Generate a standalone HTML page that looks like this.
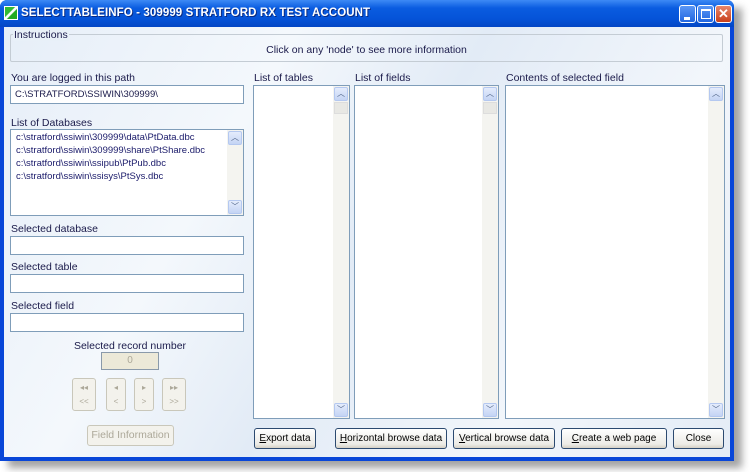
<!DOCTYPE html>
<html><head><meta charset="utf-8"><style>
*{margin:0;padding:0;box-sizing:border-box}
body{width:750px;height:472px;background:#fff;position:relative;overflow:hidden;font-family:"Liberation Sans",sans-serif;font-size:10.5px;color:#1a1a4a}
.shadow{position:absolute;left:8px;top:8px;width:734px;height:460px;background:#666;filter:blur(4px);opacity:.6}
.win{position:absolute;left:0;top:0;width:734px;height:461px;background:#0846d8;border-radius:7px 7px 0 0}
.title{position:absolute;left:0;top:0;width:734px;height:27px;border-radius:7px 7px 0 0;background:linear-gradient(#3d8af5,#0a5ce0 30%,#0553d8 70%,#0346c4)}
.title span{position:absolute;left:21px;top:7px;color:#fff;font-weight:bold;font-size:11.5px;letter-spacing:.1px;text-shadow:1px 1px #0a2a80}
.ico{position:absolute;left:4px;top:6px;width:14px;height:14px;background:linear-gradient(135deg,#3b3 40%,#fff 45%,#fff 55%,#2a2 60%);border:1px solid #fff}
.tb{position:absolute;top:5px;width:17px;height:18px;border:1px solid #fff;border-radius:3px;background:linear-gradient(#5a96f5,#2266e0)}
.client{position:absolute;left:4px;top:27px;width:726px;height:430px;background:linear-gradient(120deg,#e6eef8,#f4f8fc 30%,#e2ebf6 50%,#f2f6fb 75%,#e4ecf6)}
.abs{position:absolute}
.lbl{position:absolute;font-size:10.5px;color:#1a1a4a;white-space:nowrap}
.box{position:absolute;background:#fff;border:1px solid #7f9db9}
.sb{position:absolute;right:0;top:0;bottom:0;width:16px;background:#f4f4f0}
.ar{position:absolute;left:1px;width:14px;height:14px;background:linear-gradient(#e4ecfc,#c4d4f4);border:1px solid #b4c8f0;border-radius:2px;font-size:8px;color:#4d6185;text-align:center;line-height:12px}
.btn{position:absolute;height:21px;border:1px solid #2c4a70;border-radius:3px;background:linear-gradient(#fff,#ecebe6 80%,#d6d0c5);font-size:10px;color:#000;text-align:center;line-height:19px;white-space:nowrap}
.dis{position:absolute;border:1px solid #c9c7ba;border-radius:3px;background:#f3f2ec;color:#aca899;text-align:center;font-size:8px}
</style></head><body>
<div class="shadow"></div>
<div class="win">
<div class="title"><div class="ico"></div><span>SELECTTABLEINFO - 309999 STRATFORD RX TEST ACCOUNT</span>
<div class="tb" style="left:679px"><div style="position:absolute;left:4px;top:11px;width:6px;height:3px;background:#fff"></div></div>
<div class="tb" style="left:697px"><div style="position:absolute;left:3px;top:3px;width:10px;height:10px;border:1px solid #fff;border-top-width:2px"></div></div>
<div class="tb" style="left:715px;background:linear-gradient(#e8866a,#c8401c);color:#fff;font-size:13px;font-weight:bold;text-align:center;line-height:16px">✕</div>
</div>
<div class="client">
<div class="abs" style="left:6px;top:7px;width:713px;height:28px;border:1px solid #c4ccd4;border-radius:2px"></div>
<div class="lbl" style="left:9px;top:2px;background:#e8f0f8;padding:0 1px">Instructions</div>
<div class="lbl" style="left:6px;top:17px;width:713px;text-align:center">Click on any 'node' to see more information</div>

<div class="lbl" style="left:7px;top:45px">You are logged in this path</div>
<div class="box" style="left:6px;top:58px;width:234px;height:19px;padding:3px 4px;font-size:9.5px">C:\STRATFORD\SSIWIN\309999\</div>

<div class="lbl" style="left:7px;top:90px">List of Databases</div>
<div class="box" style="left:6px;top:102px;width:234px;height:87px;font-size:9.5px;line-height:13px;padding:1px 5px;color:#1a1a6a">
c:\stratford\ssiwin\309999\data\PtData.dbc<br>c:\stratford\ssiwin\309999\share\PtShare.dbc<br>c:\stratford\ssiwin\ssipub\PtPub.dbc<br>c:\stratford\ssiwin\ssisys\PtSys.dbc
<div class="sb"><div class="ar" style="top:1px">︿</div><div class="ar" style="bottom:1px">﹀</div></div></div>

<div class="lbl" style="left:7px;top:196px">Selected database</div>
<div class="box" style="left:6px;top:209px;width:234px;height:19px"></div>
<div class="lbl" style="left:7px;top:234px">Selected table</div>
<div class="box" style="left:6px;top:247px;width:234px;height:19px"></div>
<div class="lbl" style="left:7px;top:273px">Selected field</div>
<div class="box" style="left:6px;top:286px;width:234px;height:19px"></div>

<div class="lbl" style="left:50px;top:313px;width:152px;text-align:center">Selected record number</div>
<div class="abs" style="left:97px;top:325px;width:58px;height:18px;border:1px solid #8a9aaa;background:#ece9d8;color:#aca899;text-align:center;font-size:10px;line-height:16px">0</div>
<div class="dis" style="left:68px;top:351px;width:24px;height:33px;line-height:14px;padding-top:2px">◂◂<br>&lt;&lt;</div>
<div class="dis" style="left:102px;top:351px;width:20px;height:33px;line-height:14px;padding-top:2px">◂<br>&lt;</div>
<div class="dis" style="left:130px;top:351px;width:20px;height:33px;line-height:14px;padding-top:2px">▸<br>&gt;</div>
<div class="dis" style="left:158px;top:351px;width:24px;height:33px;line-height:14px;padding-top:2px">▸▸<br>&gt;&gt;</div>
<div class="dis" style="left:83px;top:398px;width:87px;height:21px;font-size:10.5px;line-height:19px">Field Information</div>

<div class="lbl" style="left:250px;top:45px">List of tables</div>
<div class="box" style="left:249px;top:58px;width:97px;height:334px"><div class="sb"><div class="ar" style="top:1px">︿</div><div class="ar" style="bottom:1px">﹀</div><div style="position:absolute;left:1px;top:16px;width:14px;height:12px;background:#e8e8e4;border:1px solid #ddd"></div></div></div>
<div class="lbl" style="left:351px;top:45px">List of fields</div>
<div class="box" style="left:350px;top:58px;width:145px;height:334px"><div class="sb"><div class="ar" style="top:1px">︿</div><div class="ar" style="bottom:1px">﹀</div><div style="position:absolute;left:1px;top:16px;width:14px;height:12px;background:#e8e8e4;border:1px solid #ddd"></div></div></div>
<div class="lbl" style="left:502px;top:45px">Contents of selected field</div>
<div class="box" style="left:501px;top:58px;width:220px;height:334px"><div class="sb"><div class="ar" style="top:1px">︿</div><div class="ar" style="bottom:1px">﹀</div></div></div>

<div class="btn" style="left:250px;top:401px;width:62px"><u>E</u>xport data</div>
<div class="btn" style="left:331px;top:401px;width:112px"><u>H</u>orizontal browse data</div>
<div class="btn" style="left:449px;top:401px;width:102px"><u>V</u>ertical browse data</div>
<div class="btn" style="left:557px;top:401px;width:106px"><u>C</u>reate a web page</div>
<div class="btn" style="left:669px;top:401px;width:51px">Close</div>
</div>
</div>
</body></html>
